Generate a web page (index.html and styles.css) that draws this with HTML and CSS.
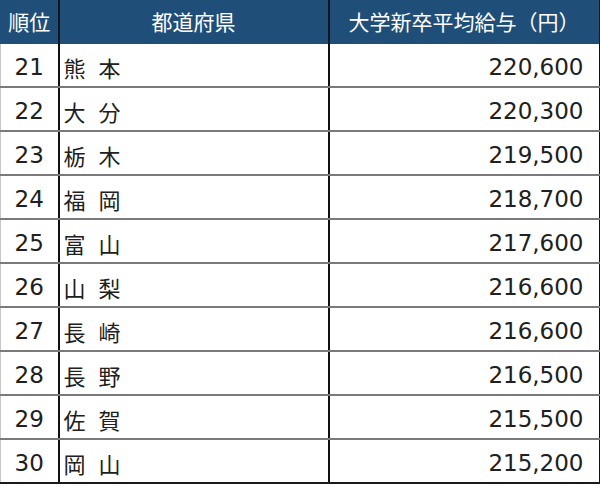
FILE: index.html
```html
<!DOCTYPE html>
<html lang="ja">
<head>
<meta charset="utf-8">
<link rel="stylesheet" href="styles.css">
</head>
<body>
<table class="ranking">
  <colgroup>
    <col class="c-rank">
    <col class="c-pref">
    <col class="c-pay">
  </colgroup>
  <thead>
    <tr>
      <th>順位</th>
      <th>都道府県</th>
      <th>大学新卒平均給与（円）</th>
    </tr>
  </thead>
  <tbody>
    <tr><td class="rank">21</td><td class="pref">熊 本</td><td class="pay">220,600</td></tr>
    <tr><td class="rank">22</td><td class="pref">大 分</td><td class="pay">220,300</td></tr>
    <tr><td class="rank">23</td><td class="pref">栃 木</td><td class="pay">219,500</td></tr>
    <tr><td class="rank">24</td><td class="pref">福 岡</td><td class="pay">218,700</td></tr>
    <tr><td class="rank">25</td><td class="pref">富 山</td><td class="pay">217,600</td></tr>
    <tr><td class="rank">26</td><td class="pref">山 梨</td><td class="pay">216,600</td></tr>
    <tr><td class="rank">27</td><td class="pref">長 崎</td><td class="pay">216,600</td></tr>
    <tr><td class="rank">28</td><td class="pref">長 野</td><td class="pay">216,500</td></tr>
    <tr><td class="rank">29</td><td class="pref">佐 賀</td><td class="pay">215,500</td></tr>
    <tr><td class="rank">30</td><td class="pref">岡 山</td><td class="pay">215,200</td></tr>
  </tbody>
</table>
</body>
</html>
```

FILE: styles.css
```css
html, body {
  margin: 0;
  padding: 0;
  background: #ffffff;
}

.ranking {
  border-collapse: collapse;
  table-layout: fixed;
  width: 599px;
  font-family: "Noto Sans CJK JP", "Noto Sans", sans-serif;
  color: #202020;
}

.c-rank { width: 58px; }
.c-pref { width: 270px; }
.c-pay { width: 271px; }

.ranking th {
  height: 42px;
  padding: 0 0 2px;
  background: #1f4e79;
  color: #ffffff;
  font-weight: normal;
  font-size: 21px;
  text-align: center;
  border-right: 2px solid #10161e;
  border-left: 1px solid #1f4e79;
}

.ranking td {
  height: 38px;
  padding: 4px 0 0;
  border-right: 2px solid #111111;
  border-bottom: 2px solid #7a7a7a;
  font-size: 22px;
  line-height: 1;
}

.ranking tbody tr:last-child td {
  border-bottom: 2px solid #1a1a1a;
}

.ranking td.rank {
  text-align: center;
  border-left: 1px solid #c8c8c8;
  font-family: "DejaVu Sans", "Noto Sans", sans-serif;
  font-size: 23px;
}

.ranking td.pref {
  padding-left: 4px;
  word-spacing: 8px;
}

.ranking td.pay {
  text-align: right;
  padding-right: 15px;
  font-family: "DejaVu Sans", "Noto Sans", sans-serif;
  font-size: 23px;
}
```
